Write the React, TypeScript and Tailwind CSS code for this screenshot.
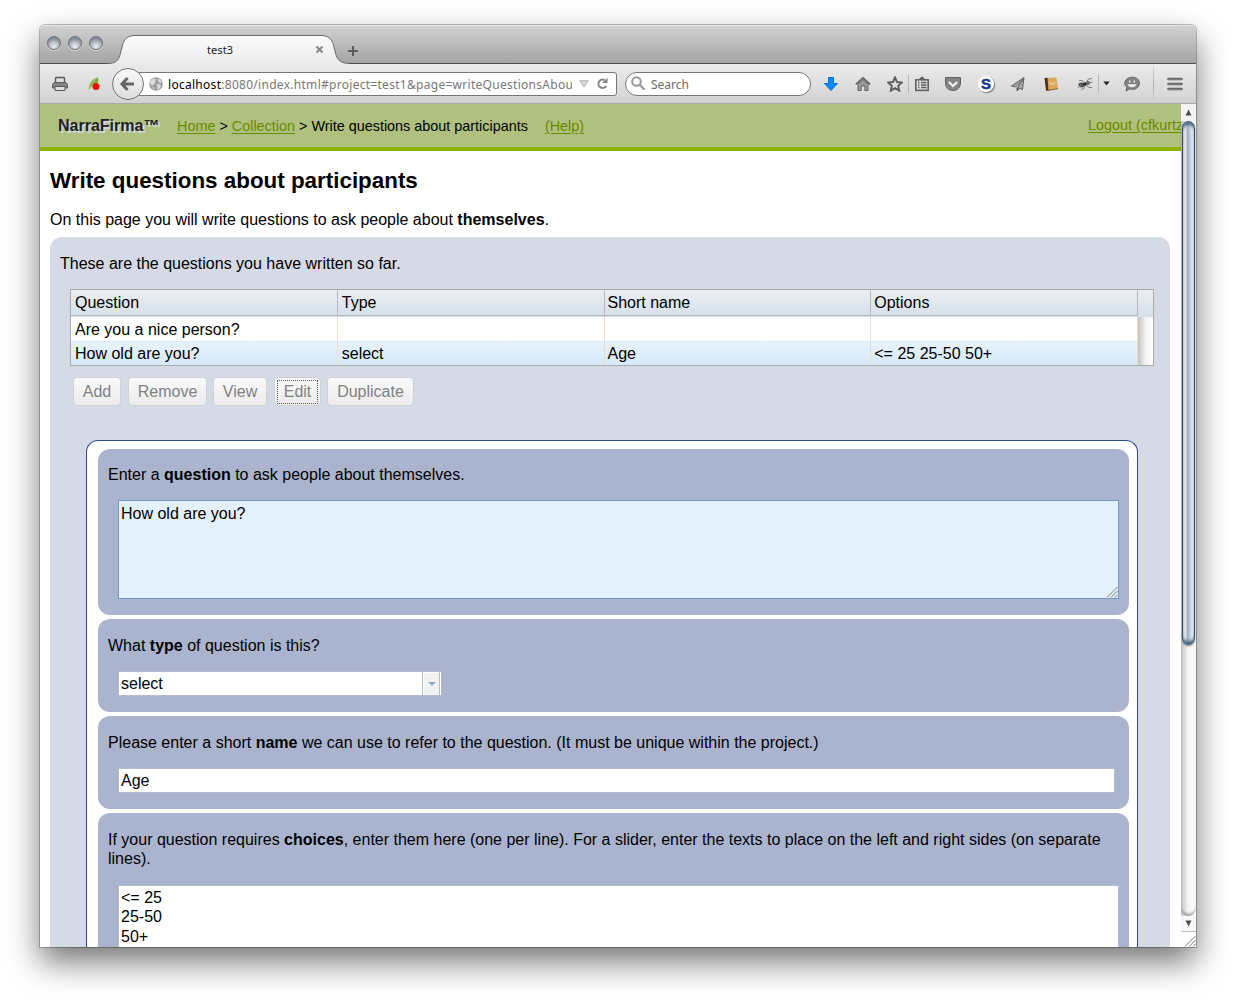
import type { ReactNode } from "react";

const UI = "font-['Noto_Sans',sans-serif]";

function Light() {
  return (
    <span className="block h-[14px] w-[14px] rounded-full border border-[#6d7178] bg-[radial-gradient(circle_at_50%_80%,#eef1f5_0%,#b9bec7_40%,#80868f_75%,#a9aeb5_100%)] shadow-[0_1px_0_rgba(255,255,255,0.5)]" />
  );
}

function TitleBar() {
  return (
    <div className="flex h-[39px] shrink-0 border-b border-[#4f4f4f] bg-gradient-to-b from-[#d3d3d3] to-[#a4a4a4] shadow-[inset_0_1px_0_#e8e8e8]">
      <div className="ml-[7px] mt-[11px] flex h-[14px] gap-[7px]">
        <Light />
        <Light />
        <Light />
      </div>
      <div className="relative -mb-px ml-[5px] mt-[10px] flex h-[29px] w-[242px] items-center">
        <svg className="absolute inset-0" width="242" height="29" viewBox="0 0 242 29">
          <defs>
            <linearGradient id="tab" x1="0" y1="0" x2="0" y2="1">
              <stop offset="0" stopColor="#fbfbfb" />
              <stop offset="1" stopColor="#ebebeb" />
            </linearGradient>
          </defs>
          <path
            d="M0 29V28.500C8 28.500 11 25 12.500 18L14.500 10C16 4 20 .5 27 .5H213C220 .5 224 4 225.500 10L227.500 18C229 25 233 28.500 242 28.500V29Z"
            fill="url(#tab)"
          />
          <path
            d="M0 28.500C8 28.500 11 25 12.500 18L14.500 10C16 4 20 .5 27 .5H213C220 .5 224 4 225.500 10L227.500 18C229 25 233 28.500 242 28.500"
            fill="none"
            stroke="#6a6a6a"
          />
        </svg>
        <span className={`relative ml-[99px] w-[27px] text-[11px] leading-4 tracking-[0.100px] text-[#222] ${UI}`}>test3</span>
        <svg className="relative ml-[81px]" width="9" height="9" viewBox="0 0 9 9">
          <path d="M1.500 1.500L7.500 7.500M7.500 1.500L1.500 7.500" stroke="#8c8c8c" strokeWidth="2.200" />
        </svg>
      </div>
      <svg className="ml-[-3px] mt-[20px]" width="12" height="12" viewBox="0 0 12 12">
        <path d="M6 1V11M1 6H11" stroke="#5c5c5c" strokeWidth="2" />
      </svg>
    </div>
  );
}

function Icon({ className, children }: { className: string; children: ReactNode }) {
  return (
    <svg className={`shrink-0 ${className}`} width="16" height="16" viewBox="0 0 16 16" fill="none">
      {children}
    </svg>
  );
}

function Toolbar() {
  return (
    <div className="flex h-[40px] shrink-0 items-center border-b border-[#a9a9a9] bg-gradient-to-b from-[#ebebeb] to-[#d3d3d3]">
      <Icon className="ml-[12px]">
        <path d="M3.500 7V2.500Q3.500 1.500 4.500 1.500H11.500Q12.500 1.500 12.500 2.500V7" stroke="#5a5a5a" strokeWidth="1.500" />
        <path d="M2 6.500H14L15.500 8.500V12H.5V8.500Z" fill="#858585" stroke="#5a5a5a" />
        <path d="M3 10.500H13V14.500H3Z" fill="#ddd" stroke="#5a5a5a" />
      </Icon>
      <Icon className="ml-[20px]">
        <path d="M.5 14C1 8 4 3 10 1C10.500 5 11 7 8 9C5 10 2 11 .5 14Z" fill="#7fae3f" />
        <path d="M1.500 13C3.500 8 6 4 10 1" stroke="#a9cc75" />
        <circle cx="8" cy="10.500" r="3.500" fill="#f50a05" />
      </Icon>
      <div className="ml-[8px] flex w-[505px] items-center">
        <div className="relative z-10 flex h-[32px] w-[32px] shrink-0 items-center justify-center rounded-full border border-[#737373] bg-gradient-to-b from-[#fafafa] to-[#dedede]">
          <svg className="-ml-[2px]" width="16" height="16" viewBox="0 0 16 16" fill="none">
            <path d="M8.500 2L3 8L8.500 14M3.500 8H15" stroke="#666" strokeWidth="3" />
          </svg>
        </div>
        <div className="-ml-[5px] flex h-[24px] flex-1 items-center rounded-r-[3px] border border-[#757575] bg-white">
          <svg className="ml-[9px] shrink-0" width="14" height="14" viewBox="0 0 14 14">
            <circle cx="7" cy="7" r="6.800" fill="#a0a0a0" />
            <path d="M3 2.500L6 1.500L7 3L5.500 4.500L6.500 6L4.500 7L3.500 9L1.500 7L1 5ZM8.500 2L11 2.500L12.500 5L11 6L9.500 4.500ZM8 7L11 7.500L12 9L10 12L8 12.500L8.500 10ZM3 10L5 10.500L5.500 12.500Z" fill="#dedede" />
          </svg>
          <span className={`ml-[5px] mt-[2px] w-[404px] overflow-hidden whitespace-nowrap text-[12px] leading-4 tracking-[0.285px] text-[#777] ${UI}`}>
            <span className="text-black">localhost</span>:8080/index.html#project=test1&amp;page=writeQuestionsAbou
          </span>
          <svg className="ml-[7px] shrink-0" width="10" height="8" viewBox="0 0 10 8">
            <path d="M.8 .8H9.200L5 7Z" fill="#ddd" stroke="#aaa" />
          </svg>
          <svg className="ml-[7px] shrink-0" width="13" height="13" viewBox="0 0 13 13">
            <path d="M8.500 3A4.200 4.200 0 1 0 10.200 9" fill="none" stroke="#858585" strokeWidth="2" />
            <path d="M11.500 .5V6H6Z" fill="#858585" />
          </svg>
        </div>
      </div>
      <div className="ml-[8px] flex h-[24px] w-[186px] shrink-0 items-center rounded-full border border-[#757575] bg-white">
        <svg className="ml-[5px]" width="15" height="15" viewBox="0 0 15 15">
          <circle cx="5.500" cy="5.500" r="4.300" fill="none" stroke="#999" strokeWidth="2" />
          <path d="M8.500 8.500L13.500 13.500" stroke="#999" strokeWidth="2.400" />
        </svg>
        <span className={`ml-[5px] mt-[2px] text-[12px] leading-4 text-[#6b6b6b] ${UI}`}>Search</span>
      </div>
      <Icon className="ml-[12px]">
        <path d="M5.500 1.500H10.500V7.500H14.500L8 14.500L1.500 7.500H5.500Z" fill="#0b8dfb" stroke="#0a6fd6" />
      </Icon>
      <Icon className="ml-[16px]">
        <path d="M3 8L8 3.500L13 8V14.500H9.800V10H6.200V14.500H3Z" fill="#999" stroke="#666" />
        <path d="M.8 8.300L8 1.800L15.200 8.300" stroke="#666" strokeWidth="1.700" />
      </Icon>
      <Icon className="ml-[16px]">
        <path d="M8 1.500L10 6L14.800 6.500L11.200 9.800L12.200 14.600L8 12.100L3.800 14.600L4.800 9.800L1.200 6.500L6 6Z" stroke="#5c5c5c" strokeWidth="1.900" />
      </Icon>
      <div className="ml-[5px] h-[18px] w-px bg-[#b5b5b5]" />
      <Icon className="ml-[5px]">
        <path d="M4.500 3.500L8 .3L11.500 3.500V4H4.500Z" fill="#626262" />
        <rect x="1.800" y="3.800" width="12.400" height="10.600" stroke="#626262" strokeWidth="1.600" />
        <path d="M4 6.500H5.500M7 6.500H12.500M4 9H5.500M7 9H12.500M4 11.500H5.500M7 11.500H12.500" stroke="#626262" strokeWidth="1.300" />
      </Icon>
      <Icon className="ml-[15px]">
        <path d="M.5 1.500H15.500V7C15.500 11.500 12.500 14.500 8 14.500C3.500 14.500 .5 11.500 .5 7Z" fill="#858585" stroke="#636363" />
        <path d="M3.800 6L8 10L12.200 6" stroke="#f3f3f3" strokeWidth="2.200" />
      </Icon>
      <div className="ml-[17px] flex h-[16px] w-[16px] shrink-0 items-center justify-center rounded-full bg-white font-['Liberation_Sans',sans-serif] text-[15px] font-bold leading-none text-[#15388c] shadow-[1px_1px_1px_rgba(0,0,0,0.45)] [-webkit-text-stroke:0.500px_#15388c]">
        S
      </div>
      <Icon className="ml-[16px]">
        <path d="M14 1.500L1.500 10L5.500 11L13.500 3L7.500 11.500L12.500 13.500Z" fill="#a5a5a5" stroke="#5f5f5f" />
        <path d="M7 11.500V15L9.500 12.500" fill="#777" stroke="#5f5f5f" />
      </Icon>
      <Icon className="ml-[17px]">
        <path d="M3 2L13.500 1.500L15 12.500L5 14.500Z" fill="#dba95b" />
        <path d="M1.500 2L4.500 1.800L5.500 14.600L3 14.800Z" fill="#4c321d" />
        <path d="M7.500 6V8H11.500V5.500" stroke="#f3d7a6" />
        <path d="M5 14.500L15 12.500" stroke="#8a6431" />
      </Icon>
      <Icon className="ml-[18px]">
        <ellipse cx="4.500" cy="9" rx="3" ry="2.400" fill="#555" />
        <ellipse cx="8" cy="8" rx="2" ry="2.100" fill="#333" />
        <circle cx="11" cy="7" r="2" fill="#666" />
        <path d="M8 7L5 4.500H2M9 6.500L11.500 3L15 2.500M8 9L7 12.500L4 13.500M9 9L12 11.500H15M12 7L15.500 6M4 9L1 12" stroke="#808080" />
      </Icon>
      <div className="ml-[5px] h-[18px] w-px bg-[#b5b5b5]" />
      <svg className="ml-[4px] shrink-0" width="7" height="5" viewBox="0 0 7 5">
        <path d="M.3 .5H6.700L3.500 4.500Z" fill="#222" />
      </svg>
      <Icon className="ml-[14px]">
        <path d="M8.500 1.200C13 1.200 15.300 4 15.300 7.200C15.300 10.800 12.500 13.300 8.500 13.300C7.500 13.300 6.500 13.100 5.800 12.800L2 15L3 11.500C1.500 10.300 .8 9 .8 7.200C.8 4 4 1.200 8.500 1.200Z" fill="#858585" stroke="#636363" />
        <path d="M5.700 4.500V6.500M10.300 4.500V6.500" stroke="#eee" strokeWidth="1.400" />
        <path d="M3.500 8.300H12.500C12 10.300 10 11.200 8 11.200C6 11.200 4 10.300 3.500 8.300Z" fill="#eee" />
      </Icon>
      <div className="ml-[13px] h-[36px] w-px bg-gradient-to-b from-[#d8dadd] via-[#a6adb5] to-[#d0d2d5]" />
      <Icon className="ml-[13px]">
        <path d="M1.500 3H14.500M1.500 8H14.500M1.500 13H14.500" stroke="#636363" strokeWidth="2.600" strokeLinecap="round" />
        <path d="M1.500 3.300H14.500M1.500 8.300H14.500M1.500 13.300H14.500" stroke="#858585" strokeWidth="1" />
      </Icon>
    </div>
  );
}

function Header() {
  return (
    <div className="flex h-[47px] shrink-0 items-center overflow-hidden whitespace-nowrap border-b-4 border-[#8db500] bg-[#b0c07f] text-[14.400px] text-[#668c00]">
      <span className="ml-[18px] w-[102px] text-[16px] font-bold text-[#222] [text-shadow:2px_2px_1px_#d6dae6]">NarraFirma™</span>
      <span className="ml-[17px] mt-[3px]">
        <a className="underline underline-offset-2">Home</a>
        <span className="text-black"> &gt; </span>
        <a className="underline underline-offset-2">Collection</a>
        <span className="text-black"> &gt; Write questions about participants</span>
      </span>
      <span className="ml-[17px] mt-[3px] flex-1">
        <a className="underline underline-offset-2">(Help)</a>
      </span>
      <span className="mt-px w-[93px]">
        <a className="underline underline-offset-2">Logout (cfkurtz)</a>
      </span>
    </div>
  );
}

const COLUMNS = ["Question", "Type", "Short name", "Options"];
const ROWS = [
  ["Are you a nice person?", "", "", ""],
  ["How old are you?", "select", "Age", "<= 25 25-50 50+"],
];

function Table() {
  return (
    <div className="ml-[20px] mt-[15px] w-[1084px] border border-[#a9abad] bg-white">
      <div className="flex h-[27px] bg-gradient-to-b from-[#ebeff4] to-[#d5e0ea]">
        <div className="grid h-[26px] w-[1067px] grid-cols-4 border-b border-[#b4b8bc]">
          {COLUMNS.map((c, i) => (
            <div key={c} className={`border-r border-[#b4b8bc] leading-[25px] ${i > 1 ? "pl-[3px]" : "pl-[4px]"}`}>{c}</div>
          ))}
        </div>
      </div>
      <div className="flex">
        <div className="w-[1067px]">
          {ROWS.map((row, r) => (
            <div
              key={row[0]}
              className={
                r === 1
                  ? "grid h-[24px] grid-cols-4 bg-gradient-to-b from-[#e8f3fc] to-[#d6e9f8] shadow-[inset_0_1px_0_#d9eaf8]"
                  : "grid h-[24px] grid-cols-4 bg-white"
              }
            >
              {row.map((cell, i) => (
                <div key={i} className={`h-[24px] border-r border-[#ecdccb] pt-px leading-[24px] ${i > 1 ? "pl-[3px]" : "pl-[4px]"}`}>{cell}</div>
              ))}
            </div>
          ))}
        </div>
        <div className="flex-1 bg-gradient-to-r from-[#c2c2c2] via-[#f3f3f3] to-white" />
      </div>
    </div>
  );
}

function Button({ className, children }: { className: string; children: ReactNode }) {
  return (
    <button className={`h-[29px] rounded-[4px] border border-[#cfd1d5] bg-gradient-to-b from-[#fafafa] to-[#ebebeb] leading-[27px] text-[#818181] ${className}`}>
      {children}
    </button>
  );
}

function Card({ className, children }: { className: string; children: ReactNode }) {
  return (
    <div className={`mb-[4px] w-[1031px] shrink-0 rounded-[12px] bg-[#abb4ce] px-[10px] ${className}`}>{children}</div>
  );
}

function Grip() {
  return (
    <svg className="absolute bottom-0 right-0" width="12" height="12" viewBox="0 0 12 12">
      <path d="M1 11.500L11.500 1M5 11.500L11.500 5M9 11.500L11.500 9" stroke="#777" fill="none" />
    </svg>
  );
}

function Scrollbar() {
  return (
    <div className="flex w-[15px] shrink-0 flex-col bg-gradient-to-r from-[#c4c4c4] via-[#f3f3f3] via-45% to-white">
      <div className="flex h-[17px] items-center justify-center bg-[#f4f4f4]">
        <svg width="7" height="7" viewBox="0 0 7 7">
          <path d="M3.500 .5L6.500 6.500H.5Z" fill="#4c4c4c" />
        </svg>
      </div>
      <div className="ml-px h-[524px] w-[13px] rounded-full border border-[#35506c] bg-[linear-gradient(90deg,#d3d9e0_0%,#e3e8ec_25%,#9dacbb_42%,#b9c9d8_58%,#e0ecf7_85%,#c5d5e3_100%)] shadow-[inset_0_4px_3px_-1px_#516a84,inset_0_-5px_3px_-2px_#516a84,0_1px_2px_rgba(0,0,0,0.5)]" />
      <div className="h-[271px] rounded-b-full shadow-[inset_0_-3px_3px_-1px_rgba(0,0,0,0.35)]" />
      <div className="flex h-[16px] items-center justify-center border-b border-[#bdbdbd] bg-[#f7f7f7]">
        <svg width="7" height="7" viewBox="0 0 7 7">
          <path d="M3.500 6.500L6.500 .5H.5Z" fill="#4c4c4c" />
        </svg>
      </div>
      <div className="relative flex-1 bg-white">
        <Grip />
      </div>
    </div>
  );
}

export default function App() {
  return (
    <div className="h-[1002px] w-[1236px] overflow-hidden bg-white pl-[40px] pt-[25px] font-['Liberation_Sans',Arial,sans-serif] text-[16px] text-black">
      <div className="flex h-[922px] w-[1156px] flex-col rounded-t-[5px] shadow-[0_0_0_1px_rgba(0,0,0,0.25),0_15px_32px_rgba(0,0,0,0.54)]">
        <div className="flex min-h-0 flex-1 flex-col overflow-hidden rounded-t-[5px] bg-white">
          <TitleBar />
          <Toolbar />
          <div className="flex min-h-0 flex-1">
            <div className="flex w-[1141px] flex-col overflow-hidden">
              <Header />
              <div className="flex min-h-0 flex-1 flex-col px-[10px]">
                <h1 className="mt-[16px] h-[28px] whitespace-nowrap text-[22.400px] font-bold leading-[28px]">Write questions about participants</h1>
                <p className="mt-[15px] h-[20px] leading-[20px]">
                  On this page you will write questions to ask people about <b>themselves</b>.
                </p>
                <div className="mt-[7px] flex min-h-0 w-[1120px] flex-1 flex-col rounded-t-[12px] bg-[#d6dae6]">
                  <p className="ml-[10px] mt-[17px] h-[20px] shrink-0 leading-[20px]">These are the questions you have written so far.</p>
                  <Table />
                  <div className="ml-[23px] mt-[11px] flex shrink-0">
                    <Button className="w-[48px]">Add</Button>
                    <Button className="ml-[7px] w-[79px]">Remove</Button>
                    <Button className="ml-[6px] w-[54px]">View</Button>
                    <Button className="ml-[7px] w-[47px] p-px">
                      <span className="mx-px block h-[24px] border border-dotted border-[#555] leading-[21px]">Edit</span>
                    </Button>
                    <Button className="ml-[6px] w-[87px]">Duplicate</Button>
                  </div>
                  <div className="ml-[36px] mt-[34px] flex min-h-0 w-[1052px] flex-1 flex-col overflow-hidden rounded-t-[12px] border border-b-0 border-[#2b478e] bg-white pl-[11px] pt-[8px]">
                    <Card className="h-[166px] pt-[16px]">
                      <p className="h-[19px] leading-[19px]">
                        Enter a <b>question</b> to ask people about themselves.
                      </p>
                      <div className="relative ml-[10px] mt-[16px] h-[99px] w-[1001px] border border-[#6e9cc4] bg-[#e4f1fd] pl-[2px] pt-[3px] leading-[19px]">
                        How old are you?
                        <Grip />
                      </div>
                    </Card>
                    <Card className="h-[93px] pt-[17px]">
                      <p className="h-[19px] leading-[19px]">
                        What <b>type</b> of question is this?
                      </p>
                      <div className="ml-[10px] mt-[16px] flex h-[25px] w-[324px] border border-[#b5bccb] bg-white">
                        <span className="w-[303px] pl-[2px] leading-[24px]">select</span>
                        <span className="flex w-[18px] items-center justify-center border-x border-[#b9bfca] bg-[#f2f2f2] shadow-[inset_1px_1px_0_#fff]">
                          <svg className="ml-px" width="8" height="4" viewBox="0 0 8 4">
                            <path d="M0 0H8L4 4Z" fill="#92a9c9" />
                          </svg>
                        </span>
                      </div>
                    </Card>
                    <Card className="h-[93px] pt-[17px]">
                      <p className="h-[19px] leading-[19px]">
                        Please enter a short <b>name</b> we can use to refer to the question. (It must be unique within the project.)
                      </p>
                      <div className="ml-[10px] mt-[16px] h-[25px] w-[997px] border border-[#b5bccb] bg-white pl-[2px] leading-[24px]">Age</div>
                    </Card>
                    <Card className="h-[250px] pt-[17px]">
                      <p className="h-[39px] leading-[19px]">
                        If your question requires <b>choices</b>, enter them here (one per line). For a slider, enter the texts to place on the left and right sides (on separate lines).
                      </p>
                      <div className="ml-[10px] mt-[16px] h-[150px] w-[1001px] whitespace-pre border border-[#b5bccb] bg-white pl-[2px] pt-[2px] leading-[19.400px]">
                        {"<= 25\n25-50\n50+"}
                      </div>
                    </Card>
                  </div>
                </div>
              </div>
            </div>
            <Scrollbar />
          </div>
        </div>
      </div>
    </div>
  );
}
